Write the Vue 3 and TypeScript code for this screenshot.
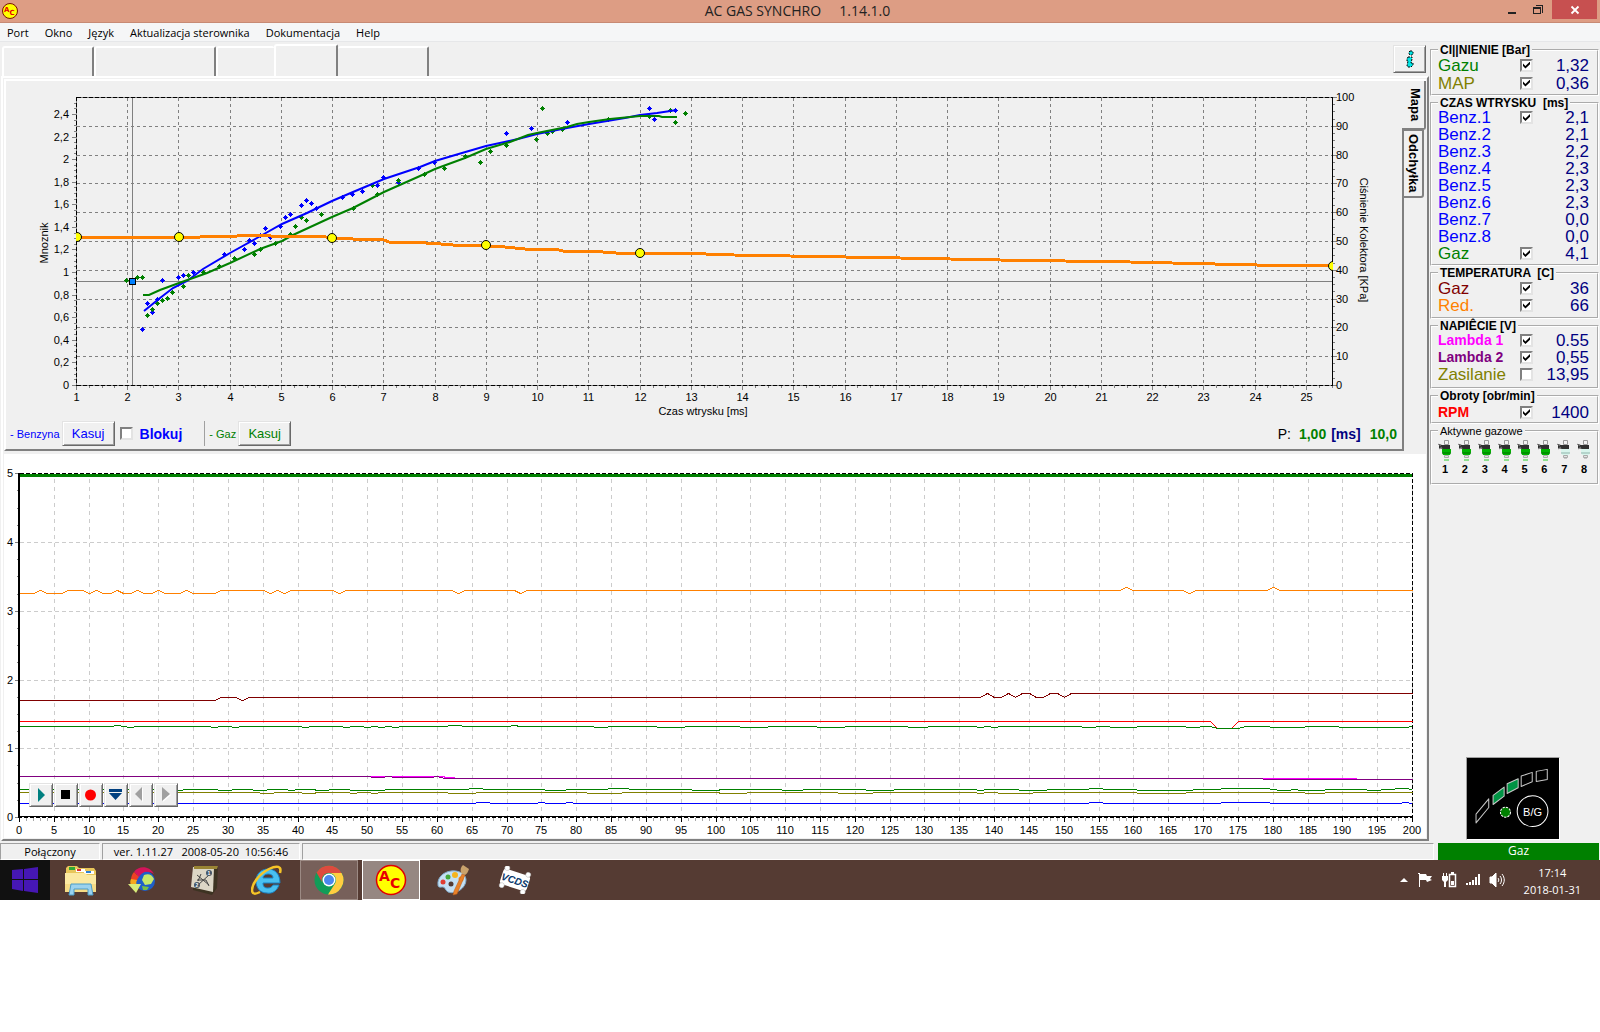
<script setup lang="ts">
import { ref } from 'vue'

type Point = [number, number]

interface Reading {
  label: string
  value: string
  color: string
  checked?: boolean
  bold?: boolean
}

interface Group {
  title: string
  kind: string
  rows: Reading[]
}

const menu = ['Port', 'Okno', 'Język', 'Aktualizacja sterownika', 'Dokumentacja', 'Help']
const pages = ['Parametry', 'Konfiguracja', 'Autokalibracja', 'Mapa', 'Błędy']

const groups = ref<Group[]>([
  {
    title: 'CI||NIENIE [Bar]',
    kind: 'pressure',
    rows: [
      { label: 'Gazu', value: '1,32', color: '#008000', checked: true },
      { label: 'MAP', value: '0,36', color: '#808000', checked: true },
    ],
  },
  {
    title: 'CZAS WTRYSKU  [ms]',
    kind: 'injection',
    rows: [
      { label: 'Benz.1', value: '2,1', color: '#0000ff', checked: true },
      { label: 'Benz.2', value: '2,1', color: '#0000ff' },
      { label: 'Benz.3', value: '2,2', color: '#0000ff' },
      { label: 'Benz.4', value: '2,3', color: '#0000ff' },
      { label: 'Benz.5', value: '2,3', color: '#0000ff' },
      { label: 'Benz.6', value: '2,3', color: '#0000ff' },
      { label: 'Benz.7', value: '0,0', color: '#0000ff' },
      { label: 'Benz.8', value: '0,0', color: '#0000ff' },
      { label: 'Gaz', value: '4,1', color: '#008000', checked: true },
    ],
  },
  {
    title: 'TEMPERATURA  [C]',
    kind: 'temperature',
    rows: [
      { label: 'Gaz', value: '36', color: '#800000', checked: true },
      { label: 'Red.', value: '66', color: '#ff8000', checked: true },
    ],
  },
  {
    title: 'NAPIÊCIE [V]',
    kind: 'voltage',
    rows: [
      { label: 'Lambda 1', value: '0.55', color: '#ff00ff', checked: true, bold: true },
      { label: 'Lambda 2', value: '0,55', color: '#800080', checked: true, bold: true },
      { label: 'Zasilanie', value: '13,95', color: '#808000', checked: false },
    ],
  },
  {
    title: 'Obroty [obr/min]',
    kind: 'speed',
    rows: [{ label: 'RPM', value: '1400', color: '#ff0000', checked: true, bold: true }],
  },
])

const lockPetrol = ref(false)
const injectors = [1, 2, 3, 4, 5, 6, 7, 8]

// Map chart scales
const px = (ms: number) => Math.round(76.5 + (ms - 1) * 51.245 - 0.5) + 0.5
const pyKpa = (kpa: number) => Math.round(385 - kpa * 2.88) + 0.5
const pyMul = (m: number) => Math.round(385 - m * 112.94) + 0.5
const range = (from: number, to: number, step: number) =>
  Array.from({ length: Math.round((to - from) / step) + 1 }, (_, i) => from + i * step)

const msTicks = range(1, 25, 1)
const msMinor = range(1, 25.5, 0.25)
const kpaTicks = range(0, 100, 10)
const kpaMinor = range(0, 100, 2.5)
const mulTicks = range(0, 2.4, 0.2)
const mulMinor = range(0, 2.5, 0.05)
const comma = (v: number) => String(Math.round(v * 10) / 10).replace('.', ',')
const join = (pts: Point[]) => pts.map((p) => p.join(',')).join(' ')

const petrolCurve = join([
  [144, 311], [160, 298], [173, 288], [187, 281], [203, 269], [230, 253], [257, 238], [282, 224],
  [307, 213], [332, 201], [353, 192], [384, 179], [420, 167], [435, 161], [462, 153], [486, 146],
  [518, 139], [537, 134], [567, 128], [589, 124], [625, 118], [640, 115], [657, 113], [677, 110],
])
const gasCurve = join([
  [143, 295], [149, 295], [160, 290], [179, 283], [207, 273], [230, 263], [260, 249], [282, 241],
  [293, 235], [332, 217], [353, 208], [384, 192], [420, 176], [435, 169], [465, 158], [486, 149],
  [510, 142], [528, 135], [537, 133], [567, 127], [577, 124], [589, 122], [610, 119], [640, 116],
  [659, 116], [662, 117], [677, 117],
])
const multiplierCurve = join([
  [77, 237], [200, 237], [204, 236], [212, 237], [220, 236], [237, 236], [240, 235], [257, 235], [267, 235],
  [271, 236], [320, 236], [332, 238], [353, 239], [384, 240], [389, 242], [422, 242], [426, 243],
  [441, 244], [453, 245], [486, 246], [505, 247], [525, 249], [555, 249], [563, 251], [590, 251],
  [616, 253], [677, 253], [734, 255], [790, 256], [900, 258], [1000, 260], [1130, 262], [1257, 265],
  [1314, 265], [1333, 266],
])
const knots: Point[] = [[77, 237], [179, 237], [332, 238], [486, 245], [640, 253], [1333, 266]]

const gasDots: Point[] = [
  [126, 280], [137, 277], [142, 277], [147, 315], [152, 309], [157, 303], [162, 300], [167, 298],
  [172, 292], [183, 286], [188, 275], [203, 272], [219, 266], [234, 258], [254, 254], [260, 249],
  [275, 243], [290, 234], [295, 226], [301, 217], [306, 220], [321, 214], [353, 208], [372, 185],
  [377, 194], [398, 180], [424, 174], [444, 168], [480, 162], [490, 151], [506, 145], [536, 139],
  [547, 133], [552, 131], [562, 129], [542, 108], [608, 119], [649, 116], [670, 110], [675, 122],
  [685, 113], [465, 156],
]
const petrolDots: Point[] = [
  [142, 329], [147, 303], [152, 312], [157, 299], [162, 280], [178, 277], [183, 275], [193, 272],
  [224, 254], [244, 249], [249, 240], [254, 243], [260, 235], [265, 228], [270, 237], [280, 226],
  [285, 217], [290, 214], [301, 205], [306, 200], [311, 203], [316, 208], [342, 197], [352, 194],
  [362, 191], [377, 185], [383, 177], [398, 182], [418, 168], [434, 162], [506, 133], [531, 128],
  [567, 122], [649, 108], [654, 119], [675, 110],
]
/** Pixel diamond, five pixels across. */
const diamond = ([x, y]: Point) => `M${x - 2} ${y}h1v-1h1v-1h1v1h1v1h1v1h-1v1h-1v1h-1v-1h-1v-1h-1z`

// Recorder chart scales
const tx = (t: number) => Math.round(19 + t * 6.965) + 0.5
const ty = (v: number) => Math.round(817 - v * 68.75) + 0.5
const timeTicks = range(0, 200, 5)
const timeMinor = range(0, 200, 1)
const levelMinor = range(0, 5, 0.25)

/** Builds a flat trace that leaves its level only on the listed intervals [from, to, y]. */
function trace(level: number, steps: [number, number, number][]): string {
  const pts: Point[] = [[tx(0), level]]
  for (const [from, to, y] of steps) {
    pts.push([tx(from - 1), level], [tx(from), y], [tx(to), y], [tx(to + 1), level])
  }
  pts.push([tx(200), level])
  return join(pts)
}

const reducerTrace = join(
  (
    [
      [0, 593], [2, 593], [3, 590], [4, 593], [6, 593], [7, 590], [9, 590], [10, 593], [11, 590],
      [12, 593], [13, 593], [14, 590], [15, 593], [16, 593], [17, 590], [18, 593], [19, 593],
      [20, 590], [21, 593], [23, 593], [24, 590], [25, 593], [28, 593], [29, 590], [35, 590],
      [36, 593], [37, 590], [38, 593], [39, 590], [45, 590], [46, 593], [47, 590], [62, 590],
      [63, 593], [64, 590], [71, 590], [72, 593], [73, 590], [158, 590], [159, 587], [160, 590],
      [167, 590], [168, 593], [169, 590], [179, 590], [180, 587], [181, 590], [200, 590],
    ] as Point[]
  ).map(([t, y]) => [tx(t), y + 0.5] as Point),
)
const gasTempTrace = join(
  (
    [
      [0, 700], [28, 700], [29, 697], [31, 697], [32, 700], [33, 697], [138, 697], [139, 693],
      [140, 697], [141, 697], [142, 693], [143, 697], [144, 693], [145, 693], [146, 697],
      [147, 697], [148, 693], [149, 693], [150, 697], [151, 693], [200, 693],
    ] as Point[]
  ).map(([t, y]) => [tx(t), y + 0.5] as Point),
)

const traces = [
  { color: '#ff8000', points: reducerTrace },
  { color: '#800000', points: gasTempTrace },
  { color: '#ff0000', points: trace(721.5, [[172, 174, 728.5]]) },
  {
    color: '#008000',
    points: trace(726.5, [
      [14, 14, 725.5], [16, 16, 727.5], [28, 28, 727.5], [31, 31, 727.5], [41, 41, 727.5],
      [47, 47, 727.5], [50, 50, 727.5], [52, 52, 727.5], [54, 54, 727.5], [62, 63, 725.5],
      [71, 71, 725.5], [83, 84, 727.5], [92, 95, 727.5], [104, 107, 727.5], [115, 118, 727.5],
      [128, 130, 727.5], [138, 138, 727.5], [140, 140, 727.5], [153, 154, 727.5],
      [157, 160, 727.5], [168, 169, 727.5], [172, 175, 728.5], [180, 184, 727.5], [190, 199, 727.5],
    ]),
  },
  {
    color: '#ff00ff',
    points: join([
      [tx(50), 776.5], [tx(61), 776.5], [tx(61), 777.5], [tx(64), 778.5], [tx(192), 778.5],
    ]),
  },
  {
    color: '#800080',
    points: join([
      [tx(0), 776.5], [tx(50), 776.5], [tx(51), 777.5], [tx(52), 777.5], [tx(53), 776.5],
      [tx(54), 777.5], [tx(59), 777.5], [tx(60), 776.5], [tx(61), 778.5], [tx(178), 778.5],
      [tx(179), 779.5], [tx(200), 779.5],
    ]),
  },
  {
    color: '#008000',
    points: trace(789.5, [
      [23, 23, 790.5], [29, 30, 790.5], [34, 35, 790.5], [39, 39, 790.5], [43, 44, 790.5],
      [48, 52, 790.5], [65, 66, 788.5], [76, 78, 790.5], [85, 87, 788.5], [97, 100, 790.5],
      [110, 112, 790.5], [122, 125, 790.5], [138, 138, 790.5], [144, 147, 790.5],
      [154, 155, 788.5], [161, 168, 790.5], [173, 179, 788.5], [181, 182, 790.5],
      [184, 187, 790.5], [194, 195, 790.5], [198, 199, 788.5],
    ]),
  },
  {
    color: '#808000',
    points: trace(792.5, [
      [35, 36, 793.5], [41, 42, 793.5], [48, 48, 793.5], [51, 51, 793.5], [62, 65, 793.5],
      [82, 86, 793.5], [101, 104, 793.5], [118, 122, 793.5], [138, 138, 793.5],
      [141, 145, 793.5], [161, 167, 793.5], [185, 187, 793.5],
    ]),
  },
  {
    color: '#0000ff',
    points: trace(803.5, [
      [66, 67, 802.5], [75, 75, 802.5], [79, 79, 802.5], [154, 155, 802.5], [173, 179, 802.5],
      [199, 199, 802.5],
    ]),
  },
]
</script>

<template>
  <div class="screen">
    <header class="titlebar">
      <div class="titlebar-side">
        <svg class="app-icon" viewBox="0 0 32 32" aria-hidden="true">
          <circle cx="16" cy="16" r="15" fill="#ffff00" stroke="#7a1200" stroke-width="2" />
          <text x="4" y="17" class="logo-text">A</text>
          <text x="15" y="24" class="logo-text">C</text>
        </svg>
      </div>
      <h1>AC GAS SYNCHRO &nbsp;&nbsp;&nbsp; 1.14.1.0</h1>
      <div class="titlebar-side window-buttons">
        <button type="button" aria-label="Minimalizuj">
          <svg width="12" height="12" viewBox="0 0 12 12"><path d="M1 8h8v2H1z" fill="#222" /></svg>
        </button>
        <button type="button" aria-label="Przywróć">
          <svg width="12" height="12" viewBox="0 0 12 12" fill="none" stroke="#222" shape-rendering="crispEdges">
            <path d="M0.500 3.500h7v6h-7zM0.500 4.500h7M2.500 1.500h7v7" />
          </svg>
        </button>
        <button type="button" class="close" aria-label="Zamknij">
          <svg width="10" height="10" viewBox="0 0 10 10"><path d="M1.500 1.500l7 7M8.500 1.500l-7 7" stroke="#fff" stroke-width="1.800" /></svg>
        </button>
      </div>
    </header>

    <nav class="menubar">
      <button v-for="item in menu" :key="item" type="button">{{ item }}</button>
    </nav>

    <div class="body">
      <main class="left">
        <div class="toolbar">
          <div class="page-tabs" role="tablist">
            <button
              v-for="(page, i) in pages"
              :key="page"
              type="button"
              role="tab"
              :class="['page-tab', 'page-tab-' + i]"
              :aria-label="page"
              :aria-selected="i === 3"
            ></button>
          </div>
          <button type="button" class="raised info" aria-label="Informacje">
            <svg width="10" height="18" viewBox="0 0 10 18">
              <path d="M5 1h2l1 1v2L7 5H5L4 4V2z" fill="#00e5e5" stroke="#000" stroke-dasharray="2 1" />
              <path d="M3 7h4v2L6 13h2v2l-2 2H3l-1-1 1-5H2V9z" fill="#00e5e5" stroke="#000" stroke-dasharray="2 1" />
            </svg>
          </button>
        </div>

        <section class="page">
          <div class="map-row">
            <div class="map-panel">
              <svg class="chart" viewBox="6 81 1396 337" role="img" aria-label="Mapa mnożnika">
                <defs>
                  <clipPath id="map-area"><rect x="76" y="97" width="1257" height="289" /></clipPath>
                </defs>
                <g class="crisp" stroke="#808080" fill="none">
                  <line v-for="v in msTicks.slice(1)" :key="'gx' + v" :x1="px(v)" :x2="px(v)" y1="98" y2="385" stroke-dasharray="3 3" />
                  <line v-for="v in kpaTicks.slice(1, 10)" :key="'gy' + v" :y1="pyKpa(v)" :y2="pyKpa(v)" x1="77" x2="1332" stroke-dasharray="3 3" />
                  <line v-for="v in msMinor" :key="'tx' + v" :x1="px(v)" :x2="px(v)" y1="386" y2="388" />
                  <line v-for="v in msTicks" :key="'tX' + v" :x1="px(v)" :x2="px(v)" y1="386" y2="390" />
                  <line v-for="v in mulMinor" :key="'tm' + v" :y1="pyMul(v)" :y2="pyMul(v)" x1="74" x2="77" />
                  <line v-for="v in mulTicks" :key="'tM' + v" :y1="pyMul(v)" :y2="pyMul(v)" x1="72" x2="77" />
                  <line v-for="v in kpaMinor" :key="'tk' + v" :y1="pyKpa(v)" :y2="pyKpa(v)" x1="1332" x2="1335" />
                  <line v-for="v in kpaTicks" :key="'tK' + v" :y1="pyKpa(v)" :y2="pyKpa(v)" x1="1332" x2="1337" />
                  <path d="M76.500 97.500H1332M76.500 385.500H1332M76.500 97V386" />
                  <path d="M76.500 97.500H1332M76.500 385.500H1332M76.500 97V386" stroke="#000" stroke-dasharray="4 2" />
                  <path d="M1332.500 97V386" stroke="#000" />
                  <path d="M132.500 98V385M77 281.500H1332" />
                </g>
                <g clip-path="url(#map-area)">
                  <path v-for="(d, i) in petrolDots" :key="'p' + i" :d="diamond(d)" class="crisp" fill="#0000ff" />
                  <path v-for="(d, i) in gasDots" :key="'g' + i" :d="diamond(d)" class="crisp" fill="#008000" />
                  <g fill="none">
                    <polyline :points="petrolCurve" stroke="#0000ff" stroke-width="2" />
                    <polyline :points="gasCurve" stroke="#008000" stroke-width="2" />
                    <polyline class="crisp" :points="multiplierCurve" stroke="#ff8000" stroke-width="3" />
                  </g>
                  <circle v-for="k in knots" :key="'k' + k[0]" :cx="k[0]" :cy="k[1]" r="4.500" fill="#ffff00" stroke="#000" />
                  <rect x="129.500" y="278.500" width="6" height="6" fill="#0080ff" stroke="#000" />
                </g>
                <g class="axis-text">
                  <text v-for="v in msTicks" :key="'lx' + v" :x="px(v)" y="401" text-anchor="middle">{{ v }}</text>
                  <text v-for="v in mulTicks" :key="'lm' + v" x="69" :y="Math.floor(pyMul(v)) + 4" text-anchor="end">{{ comma(v) }}</text>
                  <text v-for="v in kpaTicks" :key="'lk' + v" x="1336" :y="Math.floor(pyKpa(v)) + 4">{{ v }}</text>
                  <text x="703" y="415" text-anchor="middle">Czas wtrysku [ms]</text>
                  <text transform="translate(48 243) rotate(-90)" text-anchor="middle">Mnoznik</text>
                  <text transform="translate(1360 240) rotate(90)" text-anchor="middle">Ciśnienie Kolektora [KPa]</text>
                </g>
              </svg>

              <div class="map-footer">
                <span class="petrol caption">- Benzyna</span>
                <button type="button" class="raised clear petrol">Kasuj</button>
                <label class="lock petrol">
                  <input v-model="lockPetrol" type="checkbox" />
                  <span>Blokuj</span>
                </label>
                <span class="divider"></span>
                <span class="gas caption">- Gaz</span>
                <button type="button" class="raised clear gas">Kasuj</button>
                <p class="cursor-info">
                  <span class="cursor-name">P:</span>
                  <b class="gas">1,00</b>
                  <b class="navy">[ms]</b>
                  <b class="gas cursor-last">10,0</b>
                </p>
              </div>
            </div>
            <div class="side-tabs" role="tablist" aria-orientation="vertical">
              <button type="button" role="tab" class="side-tab active" aria-selected="true">Mapa</button>
              <button type="button" role="tab" class="side-tab" aria-selected="false">Odchyłka</button>
              <div class="side-fill"></div>
            </div>
          </div>

          <div class="recorder">
            <svg class="chart" viewBox="4 454 1422 384" role="img" aria-label="Rejestrator">
              <g class="crisp" fill="none">
                <g stroke="#cccccc">
                  <line v-for="v in timeTicks.slice(1)" :key="'rx' + v" :x1="tx(v)" :x2="tx(v)" y1="479" y2="816" stroke-dasharray="4 4" />
                  <line v-for="v in [1, 2, 3, 4]" :key="'ry' + v" :y1="ty(v)" :y2="ty(v)" x1="20" x2="1412" stroke-dasharray="4 3" />
                </g>
                <g stroke="#808080">
                  <line v-for="v in timeMinor" :key="'rt' + v" :x1="tx(v)" :x2="tx(v)" y1="818" y2="821" stroke="#a8a8a8" />
                  <line v-for="v in levelMinor" :key="'rl' + v" :y1="ty(v)" :y2="ty(v)" x1="17" x2="19" />
                  <line v-for="v in [0, 1, 2, 3, 4, 5]" :key="'rL' + v" :y1="ty(v)" :y2="ty(v)" x1="15" x2="19" />
                </g>
                <g stroke="#000">
                  <line v-for="v in timeTicks" :key="'rT' + v" :x1="tx(v)" :x2="tx(v)" y1="817" y2="822" />
                  <path d="M19 473V818" stroke-width="2" />
                  <path d="M18 816.500H1413" />
                  <path d="M18 817.500H1413M20 473.500H1413M1412.500 473V818" stroke-dasharray="4 2" />
                </g>
                <path d="M20 475.500H1412" stroke="#008000" stroke-width="3" />
                <polyline v-for="(t, i) in traces" :key="'tr' + i" :points="t.points" :stroke="t.color" />
              </g>
              <g class="axis-text">
                <text v-for="v in timeTicks" :key="'rlx' + v" :x="Math.floor(tx(v))" y="834" text-anchor="middle">{{ v }}</text>
                <text v-for="v in [0, 1, 2, 3, 4, 5]" :key="'rly' + v" x="13" :y="Math.floor(ty(v)) + 4" text-anchor="end">{{ v }}</text>
              </g>
            </svg>
            <div class="player">
              <button type="button" class="raised" aria-label="Start">
                <svg width="22" height="22" viewBox="0 0 22 22"><path d="M8 4l7 7-7 7z" fill="#008080" /></svg>
              </button>
              <button type="button" class="raised" aria-label="Stop">
                <svg width="22" height="22" viewBox="0 0 22 22"><path d="M6 6h9v9H6z" fill="#000" /></svg>
              </button>
              <button type="button" class="raised" aria-label="Nagrywaj">
                <svg width="22" height="22" viewBox="0 0 22 22"><circle cx="10.500" cy="11" r="5.500" fill="#f00" /></svg>
              </button>
              <button type="button" class="raised" aria-label="Zapisz">
                <svg width="22" height="22" viewBox="0 0 22 22"><path d="M4 5h13v3H4zM4 9h13l-6.500 7z" fill="#004080" /></svg>
              </button>
              <button type="button" class="raised" aria-label="Wstecz" disabled>
                <svg width="22" height="22" viewBox="0 0 22 22"><path d="M13 4v14l-7-7z" fill="#fff" /><path d="M12 3v14l-7-7z" fill="#a0a0a0" /></svg>
              </button>
              <button type="button" class="raised" aria-label="Dalej" disabled>
                <svg width="22" height="22" viewBox="0 0 22 22"><path d="M8 4l8 7-8 7z" fill="#fff" /><path d="M7 3l8 7-8 7z" fill="#a0a0a0" /></svg>
              </button>
            </div>
          </div>
        </section>
      </main>

      <aside class="right">
        <fieldset v-for="group in groups" :key="group.kind" :class="['group', group.kind]">
          <legend>{{ group.title }}</legend>
          <div v-for="row in group.rows" :key="row.label" class="reading">
            <label
              :for="group.kind + '-' + row.label"
              :class="['reading-label', { bold: row.bold }]"
              :style="{ color: row.color }"
            >{{ row.label }}</label>
            <input v-if="row.checked !== undefined" :id="group.kind + '-' + row.label" v-model="row.checked" type="checkbox" />
            <output class="reading-value">{{ row.value }}</output>
          </div>
        </fieldset>

        <fieldset class="group injectors">
          <legend>Aktywne gazowe</legend>
          <div class="injector-list">
            <div v-for="n in injectors" :key="n" class="injector">
              <svg width="14" height="22" viewBox="0 0 14 22">
                <path d="M6.500 1.500h4v4h-4z" fill="#f4f4f4" stroke="#999" />
                <path d="M1 5l3 1h8v4H5L1 9z" fill="#303030" />
                <path d="M0 5l3 2M1 10l3-2" stroke="#777" />
                <path d="M4 10h9v3l-1 3H5l-1-3z" :fill="n <= 6 ? '#00b400' : '#d8f4ec'" />
                <path d="M4 14h9" :stroke="n <= 6 ? '#007000' : '#8fb4aa'" />
                <path d="M6.500 16.500h4v2h-4z" fill="#e4e4e4" stroke="#aaa" />
                <path v-if="n <= 6" d="M6 20h5v2H6z" fill="#8ee08e" />
                <path v-else d="M7 19h3v1H7z" fill="#c8c8c8" />
              </svg>
              <span>{{ n }}</span>
            </div>
          </div>
        </fieldset>

        <button type="button" class="fuel-switch" aria-label="Przełącznik B/G">
          <svg viewBox="200 54 275 243">
            <g fill="none" stroke="#c8c8c8" stroke-width="3" stroke-linejoin="round">
              <path d="M227 222l38-46v26l-38 46z" />
              <path d="M278 166l33-25v27l-33 25z" fill="#009444" />
              <path d="M320 131l33-15v27l-33 17z" fill="#009444" />
              <path d="M362 108l33-11v28l-33 14z" />
              <path d="M407 94l33-6v30l-33 6z" />
            </g>
            <circle cx="315" cy="216" r="15" fill="#008000" stroke="#fff" stroke-width="3" stroke-dasharray="7 3" />
            <circle cx="396" cy="213" r="46" fill="none" stroke="#fff" stroke-width="3" />
            <text x="396" y="226" text-anchor="middle">B/G</text>
          </svg>
        </button>
      </aside>
    </div>

    <footer class="statusbar">
      <span class="pane connection">Połączony</span>
      <span class="pane version">ver. 1.11.27 &nbsp; 2008-05-20 &nbsp;10:56:46</span>
      <span class="pane rest"></span>
      <span class="fuel">Gaz</span>
    </footer>

    <div class="taskbar">
      <button type="button" class="start" aria-label="Start">
        <svg width="28" height="26" viewBox="0 0 28 26" fill="#4617b4">
          <path d="M1 3l11-1v10H1zM13 2l14-2v12H13zM1 13h11v11L1 22zM13 13h14v13l-14-2z" />
        </svg>
      </button>
      <button type="button" class="task" aria-label="Eksplorator plików">
        <svg width="34" height="32" viewBox="0 0 34 32">
          <path d="M2 4l2-2h9l2 2h15l2 3v21H2z" fill="#e8c65a" />
          <path d="M5 3h6v3H5z" fill="#2fa836" />
          <path d="M12 5h9v3h-9z" fill="#fff" /><path d="M13 5h4v2h-4z" fill="#d33" />
          <path d="M20 7h10v3H20z" fill="#fff" /><path d="M22 7h5v2h-5z" fill="#2d7fd0" />
          <path d="M1 9h20l2 2h9v17H1z" fill="#fbe9a2" />
          <path d="M1 20h31v8H1z" fill="#f1d273" opacity=".6" />
          <path d="M7 20h20l2 11h-5v-6H10v6H5z" fill="#9bd2ef" stroke="#4b9cc8" />
        </svg>
      </button>
      <button type="button" class="task" aria-label="Pobieranie">
        <svg width="30" height="30" viewBox="0 0 30 30">
          <circle cx="17" cy="16" r="10" fill="#1e5fc8" />
          <path d="M16 10c5-2 8 0 10 4l-3 5-6 1-3-5z" fill="#c5e86a" />
          <path d="M14 21l7 1-2 3h-4z" fill="#77c045" />
          <path d="M26 9C22 1 11 0 6 7l5 5c3-5 8-7 15-3z" fill="#d4145a" />
          <path d="M6 7c-2 2-3 5-3 8l6 1c0-2 1-3 2-4z" fill="#ee4023" />
          <path d="M3 14l6 1c-1 2-1 4 0 5H3c-1-2-1-4 0-6z" fill="#f5a81c" />
          <path d="M0 19h13l-5 9z" fill="#d8ec7a" />
        </svg>
      </button>
      <button type="button" class="task" aria-label="Schemat">
        <svg width="32" height="32" viewBox="0 0 32 32">
          <path d="M5 2h24l-1 22-5 7-19-5z" fill="#3d3322" />
          <path d="M4 3l21 1-1 24-22-5z" fill="#dcd6c6" />
          <path d="M5 2h24l-1 3H5z" fill="#9a8434" />
          <path d="M8 11l12 10M9 21l11-10M8 16h9l3 6M12 10l-3 7" stroke="#444" fill="none" />
          <circle cx="20" cy="9" r="3" fill="#456" /><circle cx="8" cy="21" r="3" fill="#456" />
          <text x="20" y="11" class="tiny-digit">1</text><text x="8" y="23" class="tiny-digit">2</text>
        </svg>
      </button>
      <button type="button" class="task" aria-label="Internet Explorer">
        <svg width="32" height="32" viewBox="0 0 32 32" fill="none">
          <path d="M28 21c-2 6-7 9-12 8-7 0-11-5-11-12C5 10 10 5 17 5s12 5 12 14H12c0 4 2 5 5 5 2 0 4-1 5-3zM12 14h10c0-3-2-4-5-4s-5 2-5 4z" fill="#49c0f0" stroke="#1a82c4" fill-rule="evenodd" />
          <path d="M29 9c2-7-3-8-11-4C8 10 1 20 1 26c0 5 4 4 8 2" stroke="#f6c427" stroke-width="2.500" />
        </svg>
      </button>
      <button type="button" class="task running" aria-label="Chrome">
        <svg width="30" height="30" viewBox="0 0 30 30">
          <circle cx="15" cy="15" r="14.500" fill="#119c58" />
          <path d="M2.500 7.500A14.500 14.500 0 0 1 27.600 8H15a7 7 0 0 0-6.500 10z" fill="#dd4b3e" />
          <path d="M27.600 8A14.500 14.500 0 0 1 14 29.500L21 18.500A7 7 0 0 0 15 8z" fill="#ffcd40" />
          <circle cx="15" cy="15" r="6.500" fill="#fff" /><circle cx="15" cy="15" r="5" fill="#4a87ee" />
        </svg>
      </button>
      <button type="button" class="task running current" aria-label="AC Gas Synchro">
        <svg width="32" height="32" viewBox="0 0 32 32">
          <circle cx="16" cy="16" r="14.500" fill="#ffff00" stroke="#e00000" stroke-width="1.500" />
          <text x="4" y="17" class="logo-text">A</text>
          <text x="15" y="24" class="logo-text">C</text>
        </svg>
      </button>
      <button type="button" class="task" aria-label="Paint">
        <svg width="32" height="32" viewBox="0 0 32 32">
          <path d="M14 7C6 8 0 14 1 21c0 3 3 2 5 2s2 3 5 5c8 3 18-4 18-12 0-6-7-10-15-9z" fill="#c4e0f4" stroke="#7fa8c8" />
          <circle cx="14" cy="20" r="2.500" fill="#553b33" />
          <circle cx="6" cy="18" r="2.500" fill="#e03c31" /><circle cx="11" cy="13" r="2.500" fill="#43a83c" />
          <circle cx="18" cy="11" r="3" fill="#f5b41d" /><circle cx="24" cy="15" r="2.500" fill="#f08c1c" />
          <path d="M25 10l3 1-8 19-4 1 1-4z" fill="#e8812a" stroke="#b85a14" stroke-width=".5" />
          <path d="M24 9c-1-4 0-6 2-8l6 4c-1 3-2 5-4 6z" fill="#c9a26c" />
        </svg>
      </button>
      <button type="button" class="task" aria-label="VCDS">
        <svg width="34" height="28" viewBox="0 0 34 28">
          <g transform="rotate(18 17 14)">
            <rect x="3" y="6" width="28" height="16" rx="3" fill="#fff" />
            <g fill="#fff" stroke="#bbb" stroke-width=".5">
              <circle cx="6" cy="5" r="2.500" /><circle cx="28" cy="5" r="2.500" />
              <circle cx="6" cy="23" r="2.500" /><circle cx="28" cy="23" r="2.500" />
            </g>
            <text x="17" y="18" text-anchor="middle" class="vcds">VCDS</text>
          </g>
        </svg>
      </button>

      <div class="tray">
        <svg width="10" height="6" viewBox="0 0 10 6"><path d="M1 5l4-4 4 4z" fill="#fff" /></svg>
        <svg width="16" height="16" viewBox="0 0 16 16">
          <path d="M2.500 1v14M1 1.500h2" stroke="#fff" /><path d="M3 2h6l1 2h5l-2 3 2 1-5 2-1-2H3z" fill="#fff" />
        </svg>
        <svg width="16" height="16" viewBox="0 0 16 16">
          <path d="M2 1h1v3H2zM5 1h1v3H5zM1 4h6v4L5 10v5H3v-5L1 8z" fill="#fff" />
          <path d="M8.500 2.500h6v12h-6z" fill="none" stroke="#fff" stroke-width="1.500" />
          <path d="M10 0h3v2h-3zM10 9h3v4h-3z" fill="#fff" />
        </svg>
        <svg width="16" height="14" viewBox="0 0 16 14" fill="#fff">
          <path d="M1 10h2v2H1zM4 9h2v3H4zM7 7h2v5H7zM10 4h2v8h-2zM13 1h2v11h-2z" />
        </svg>
        <svg width="16" height="16" viewBox="0 0 16 16" fill="none" stroke="#fff">
          <path d="M1 5h2l4-4v14l-4-4H1z" fill="#fff" /><path d="M9 6c1 1 1 3 0 4M11 4c2 2 2 6 0 8M13 2c3 4 3 8 0 12" />
        </svg>
      </div>
      <div class="clock"><time>17:14</time><span>2018-01-31</span></div>
    </div>
  </div>
</template>

<style>
body {
  margin: 0;
  background: #fff;
}
</style>

<style scoped>
.screen {
  font-family: 'Liberation Sans', Arial, sans-serif;
  font-size: 11px;
  color: #000;
  background: #f0f0f0;
}
button {
  margin: 0;
  padding: 0;
  border: 0;
  background: none;
  font-family: inherit;
  color: inherit;
}
svg {
  display: block;
}
.logo-text {
  font: bold 14px 'DejaVu Sans', sans-serif;
  fill: #e80000;
}

.titlebar {
  display: grid;
  grid-template-columns: 1fr auto 1fr;
  height: 22px;
  padding-right: 3px;
  background: #dd9d84;
  border-bottom: 1px solid #c78a74;
}
.titlebar-side {
  display: flex;
  align-items: center;
}
.app-icon {
  width: 16px;
  height: 16px;
  margin-left: 2px;
}
h1 {
  margin: 0 2px 0 0;
  font: 14px/22px 'Open Sans', sans-serif;
  color: #222;
}
.window-buttons {
  justify-content: flex-end;
  align-items: flex-start;
}
.window-buttons button {
  display: flex;
  align-items: center;
  justify-content: center;
  width: 26px;
  height: 19px;
}
.window-buttons .close {
  width: 45px;
  background: #c75050;
}

.menubar {
  display: flex;
  height: 18px;
  background: #f5f6f7;
  border-bottom: 1px solid #e6e7e9;
}
.menubar button {
  padding: 0 8px;
  font: 11px/20px 'Open Sans', sans-serif;
}
.menubar button:first-child {
  padding-left: 7px;
}

.body {
  display: flex;
}
.left {
  flex: 1;
  min-width: 0;
}
.toolbar {
  display: flex;
  justify-content: space-between;
  align-items: flex-start;
  height: 34px;
}
.page-tabs {
  display: flex;
  align-items: flex-end;
  height: 34px;
  padding-left: 2px;
}
.page-tab {
  box-sizing: border-box;
  height: 30px;
  border-top: 2px solid #fff;
  border-left: 2px solid #fff;
  border-right: 2px solid #808080;
  border-radius: 3px 2px 0 0;
}
.page-tab-0 {
  width: 92px;
}
.page-tab-1 {
  width: 122px;
}
.page-tab-2 {
  width: 58px;
  border-right: 0;
}
.page-tab-3 {
  width: 64px;
  height: 32px;
}
.page-tab-4 {
  width: 91px;
  border-left: 0;
}
.raised {
  display: flex;
  align-items: center;
  justify-content: center;
  box-sizing: border-box;
  background: #f0f0f0;
  border: 1px solid;
  border-color: #e3e3e3 #696969 #696969 #e3e3e3;
  box-shadow: inset 1px 1px #fff, inset -1px -1px #a0a0a0;
}
.info {
  width: 33px;
  height: 28px;
  margin: 3px 3px 0 0;
}

.page {
  margin-left: 1px;
  padding: 1px 1px 1px;
  border-style: solid;
  border-width: 2px;
  border-color: #fff #808080 #808080 #fff;
}
.map-row {
  display: flex;
  border-top: 2px solid #fff;
}
.map-panel {
  flex: 1;
  min-width: 0;
  border-left: 2px solid #fff;
  border-bottom: 2px solid #808080;
}
.chart {
  width: 100%;
  height: auto;
}
.crisp {
  shape-rendering: crispEdges;
}
.axis-text {
  font: 11px 'Liberation Sans', sans-serif;
}
.map-footer {
  display: flex;
  align-items: center;
  height: 31px;
  padding: 0 5px 0 4px;
}
.petrol {
  color: #0000ff;
}
.gas {
  color: #008000;
}
.navy {
  color: #000080;
}
.caption {
  line-height: 14px;
}
.clear {
  width: 53px;
  height: 25px;
  margin-left: 2px;
  font-size: 13px;
}
.lock {
  display: flex;
  align-items: center;
  gap: 7px;
  margin-left: 5px;
  font-weight: bold;
  font-size: 14px;
}
.divider {
  width: 1px;
  height: 25px;
  margin: 0 4px 0 22px;
  background: #a0a0a0;
}
.cursor-info {
  display: flex;
  margin: 0 0 0 auto;
  font-size: 14px;
  line-height: 18px;
  gap: 5px;
}
.cursor-name {
  margin-right: 3px;
}
.cursor-last {
  margin-left: 4px;
}

.side-tabs {
  display: flex;
  flex-direction: column;
  width: 24px;
}
.side-tab {
  box-sizing: border-box;
  width: 22px;
  height: 68px;
  writing-mode: vertical-rl;
  font-weight: bold;
  font-size: 13px;
  border: solid #808080;
  border-width: 1px 2px 2px 2px;
  border-radius: 0 0 3px 0;
}
.side-tab.active {
  width: 24px;
  height: 49px;
  border-width: 0 2px 2px 0;
  padding-left: 4px;
}
.side-fill {
  flex: 1;
  border-left: 2px solid #808080;
}

.recorder {
  position: relative;
  margin-top: 3px;
  background: #fff;
}
.player {
  position: absolute;
  left: 25px;
  bottom: 31px;
  display: flex;
  gap: 1px;
}
.player .raised {
  width: 24px;
  height: 24px;
}

.right {
  display: flex;
  flex-direction: column;
  gap: 1px;
  width: 169px;
  padding: 2px 1px 1px 1px;
}
.group {
  box-sizing: border-box;
  margin: 0;
  min-width: 0;
  padding: 0 8px 0 6px;
  border: 2px groove #fff;
}
.group legend {
  height: 12px;
  font-weight: bold;
  font-size: 12px;
  line-height: 12px;
  white-space: pre;
}
.pressure,
.temperature {
  height: 52px;
}
.injection {
  height: 169px;
}
.temperature .reading {
  padding-top: 1px;
}
.voltage {
  height: 69px;
}
.speed {
  height: 34px;
}
.speed .reading {
  padding-top: 2px;
}
.injectors {
  height: 60px;
}
.reading {
  display: flex;
  align-items: center;
  height: 17px;
  font-size: 17px;
  line-height: 17px;
}
.temperature .reading {
  height: 16px;
}
.pressure .reading {
  height: 18px;
}
.reading-label {
  width: 82px;
  white-space: nowrap;
}
.reading-label.bold {
  font-weight: bold;
  font-size: 14px;
}
.reading-value {
  margin-left: auto;
  color: #000080;
}
input[type='checkbox'] {
  appearance: none;
  position: relative;
  flex: none;
  box-sizing: border-box;
  width: 13px;
  height: 13px;
  margin: 0;
  background: #fff;
  border: 2px solid;
  border-color: #808080 #e3e3e3 #e3e3e3 #808080;
}
input[type='checkbox']:checked::after {
  content: '';
  position: absolute;
  inset: 1px;
  background: #000;
  clip-path: polygon(0 30%, 35% 65%, 100% 0, 100% 40%, 35% 100%, 0 65%);
}
.injectors {
  padding: 0 3px;
}
.injectors legend {
  margin-left: 3px;
  font-weight: normal;
  font-size: 11px;
}
.injector-list {
  display: flex;
}
.injector {
  flex: 1;
  display: flex;
  flex-direction: column;
  align-items: center;
  padding-top: 2px;
  font-weight: bold;
  font-size: 11px;
  line-height: 16px;
}
.fuel-switch {
  width: 94px;
  margin: auto 0 0 36px;
  background: #000;
  border: 1px solid;
  border-color: #a0a0a0 #fff #fff #a0a0a0;
}
.fuel-switch text {
  font: 33px 'Liberation Sans', sans-serif;
  fill: #fff;
}

.statusbar {
  display: flex;
  gap: 2px;
  height: 17px;
  padding-top: 2px;
  font: 11px/16px 'Open Sans', sans-serif;
}
.pane {
  box-sizing: border-box;
  border: 1px solid;
  border-color: #a0a0a0 #fff #fff #a0a0a0;
  text-align: center;
  white-space: nowrap;
}
.connection {
  width: 100px;
}
.version {
  width: 198px;
}
.rest {
  flex: 1;
}
.fuel {
  width: 161px;
  margin: 0 1px 0 2px;
  background: #008000;
  color: #fff;
  font-size: 12px;
  text-align: center;
}

.taskbar {
  display: flex;
  align-items: stretch;
  height: 40px;
  background: #553b33;
  color: #fff;
}
.taskbar button {
  display: flex;
  align-items: center;
  justify-content: center;
}
.start {
  width: 50px;
  background: #111;
}
.task {
  box-sizing: border-box;
  width: 58px;
  margin: 0 2px;
}
.running {
  background: #77605a;
  border: 1px solid #9c8a84;
}
.current {
  background: #968782;
  border-color: #fff;
}
.tiny-digit {
  font: bold 5px 'Liberation Sans', sans-serif;
  fill: #fff;
  text-anchor: middle;
}
.vcds {
  font: italic bold 10px 'Liberation Sans', sans-serif;
  fill: #0b3a6e;
}
.tray {
  display: flex;
  align-items: center;
  gap: 8px;
  margin-left: auto;
}
.clock {
  display: flex;
  flex-direction: column;
  justify-content: center;
  align-items: center;
  margin: 2px 19px 0 19px;
  font: 11px/17px 'Open Sans', sans-serif;
}
</style>
